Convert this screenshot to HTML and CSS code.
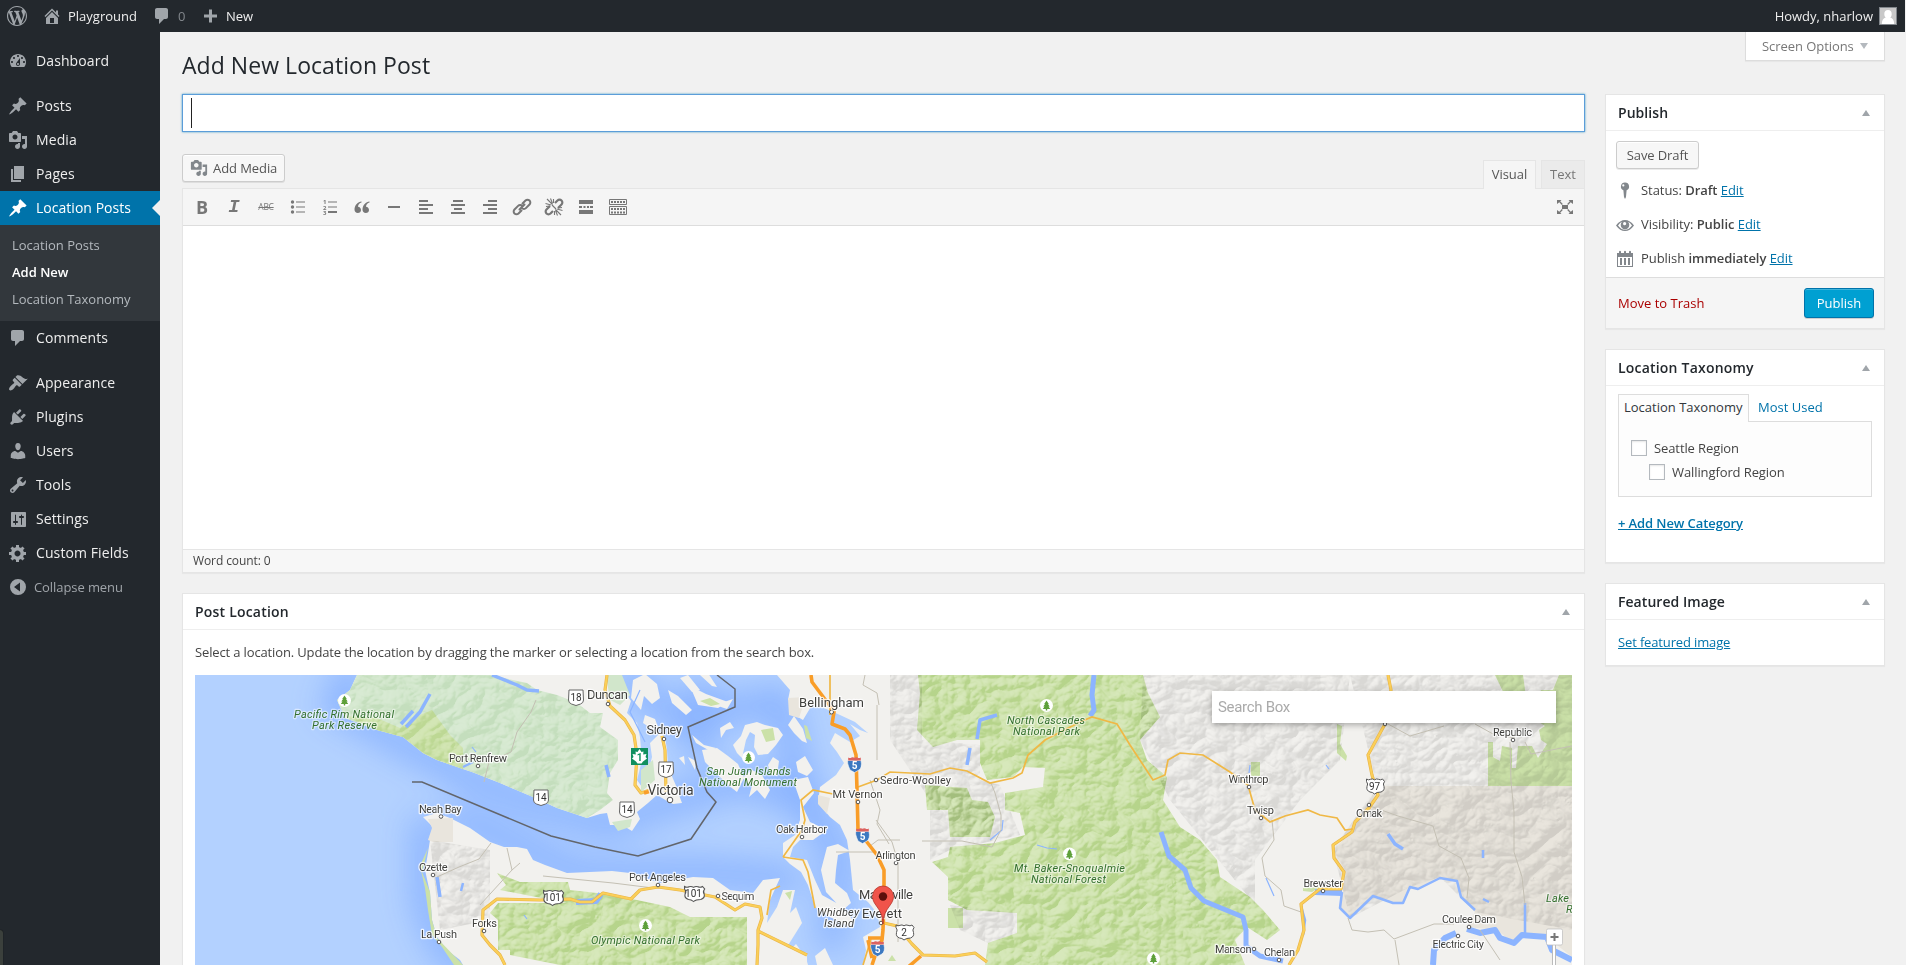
FILE: index.html
```
<!DOCTYPE html>
<html lang="en">
<head>
<meta charset="utf-8">
<title>Add New Location Post</title>
<link rel="stylesheet" href="styles.css">
</head>
<body>
<svg class="defs" width="0" height="0">
<symbol id="i-wp" viewBox="0 0 20 20"><path d="M20 10c0-5.51-4.49-10-10-10C4.48 0 0 4.49 0 10c0 5.52 4.48 10 10 10 5.51 0 10-4.48 10-10zM7.78 15.37L4.37 6.22c.55-.02 1.17-.08 1.17-.08.5-.06.44-1.13-.06-1.11 0 0-1.45.11-2.37.11-.18 0-.37 0-.58-.01C4.12 2.69 6.87 1.11 10 1.11c2.33 0 4.45.87 6.05 2.34-.68-.11-1.65.39-1.65 1.58 0 .74.45 1.36.9 2.1.35.61.55 1.36.55 2.46 0 1.49-1.4 5-1.4 5l-3.03-8.37c.54-.02.82-.17.82-.17.5-.05.44-1.25-.06-1.22 0 0-1.44.12-2.38.12-.87 0-2.33-.12-2.33-.12-.5-.03-.56 1.2-.06 1.22l.92.08 1.26 3.41zM17.41 10c.24-.64.74-1.87.43-4.25.7 1.29 1.05 2.71 1.05 4.25 0 3.29-1.73 6.24-4.4 7.78.97-2.59 1.94-5.2 2.92-7.78zM6.1 18.09C3.12 16.65 1.11 13.53 1.11 10c0-1.3.23-2.48.72-3.59C3.25 10.3 4.67 14.2 6.1 18.09zm4.03-6.63l2.58 6.98c-.86.29-1.76.45-2.71.45-.79 0-1.57-.11-2.29-.33.81-2.38 1.62-4.74 2.42-7.1z"/></symbol>
<symbol id="i-home" viewBox="0 0 20 20"><path fill-rule="evenodd" d="M16 8.5l1.53 1.53-1.06 1.06L10 4.6l-6.47 6.49-1.06-1.06L10 2.5l4 4v-2h2v4zm-6-2.46l6 5.99V18H4v-5.97zM12 17v-5H8v5h4z"/></symbol>
<symbol id="i-comment" viewBox="0 0 20 20"><path d="M5 2h9c1.1 0 2 .9 2 2v7c0 1.1-.9 2-2 2h-2l-5 5v-5H5c-1.1 0-2-.9-2-2V4c0-1.1.9-2 2-2z"/></symbol>
<symbol id="i-plus" viewBox="0 0 20 20"><path d="M17 8.500v3h-5v5H9v-5H4v-3h5v-5h3v5z"/></symbol>
<symbol id="i-dash" viewBox="0 0 20 20"><path fill-rule="evenodd" d="M3.760 16h12.480c1.100-1.370 1.760-3.110 1.760-5 0-4.420-3.580-8-8-8s-8 3.580-8 8c0 1.890.66 3.630 1.760 5zM10 4c.55 0 1 .45 1 1s-.45 1-1 1-1-.45-1-1 .45-1 1-1zM6 6c.55 0 1 .45 1 1s-.45 1-1 1-1-.45-1-1 .45-1 1-1zm8 0c.55 0 1 .45 1 1s-.45 1-1 1-1-.45-1-1 .45-1 1-1zm-5.370 5.550L12 7v6c0 1.100-.9 2-2 2s-2-.9-2-2c0-.57.24-1.080.63-1.450zM4 10c.55 0 1 .45 1 1s-.45 1-1 1-1-.45-1-1 .45-1 1-1zm12 0c.55 0 1 .45 1 1s-.45 1-1 1-1-.45-1-1 .45-1 1-1zm-5 3c0-.55-.45-1-1-1s-1 .45-1 1 .45 1 1 1 1-.45 1-1z"/></symbol>
<symbol id="i-pin" viewBox="0 0 20 20"><path d="M10.440 3.020l1.820-1.820 6.360 6.350-1.830 1.820c-1.050-.68-2.480-.57-3.410.36l-.75.75c-.92.93-1.040 2.350-.35 3.410l-1.830 1.820-2.410-2.410-2.800 2.790c-.42.42-3.380 2.710-3.800 2.290s1.860-3.390 2.280-3.810l2.790-2.790L4.100 9.360l1.830-1.820c1.050.69 2.480.57 3.400-.36l.75-.75c.93-.92 1.050-2.350.36-3.410z"/></symbol>
<symbol id="i-media" viewBox="0 0 20 20"><path fill-rule="evenodd" d="M13 11V4c0-.55-.45-1-1-1h-1.670L9 1H5L3.670 3H2c-.55 0-1 .45-1 1v7c0 .55.45 1 1 1h10c.55 0 1-.45 1-1zM7 4.500c1.380 0 2.500 1.120 2.500 2.500S8.380 9.500 7 9.500 4.500 8.380 4.500 7 5.620 4.500 7 4.500zM14 6h5v10.500c0 1.380-1.120 2.500-2.500 2.500S14 17.880 14 16.500s1.120-2.500 2.500-2.500c.17 0 .34.02.5.05V9h-3V6zm-4 8.050V13h2v3.500c0 1.380-1.120 2.500-2.500 2.500S7 17.880 7 16.500 8.120 14 9.500 14c.17 0 .34.02.5.05z"/></symbol>
<symbol id="i-page" viewBox="0 0 20 20"><path d="M6 15V2h10v13H6zm-1 1h8v2H3V5h2v11z"/></symbol>
<symbol id="i-look" viewBox="0 0 20 20"><path d="M14.480 11.060L7.410 3.990l1.500-1.500c.5-.56 2.300-.47 3.510.32 1.210.8 1.430 1.280 2.910 2.100 1.180.64 2.450 1.260 4.450.85zm-.71.71L6.700 4.700 4.930 6.470c-.39.39-.39 1.020 0 1.410l1.060 1.060c.39.39.39 1.030 0 1.420-.6.6-1.430 1.110-2.210 1.690-.35.26-.7.53-1.010.84C1.430 14.230.4 16.080 1.400 17.070c.99 1 2.840-.03 4.180-1.360.31-.31.58-.66.85-1.020.57-.78 1.080-1.610 1.690-2.210.39-.39 1.020-.39 1.410 0l1.060 1.060c.39.39 1.020.39 1.410 0z"/></symbol>
<symbol id="i-plug" viewBox="0 0 20 20"><path d="M13.110 4.360L9.870 7.600 8 5.730l3.240-3.240c.35-.34 1.050-.2 1.560.32.52.51.66 1.210.31 1.550zm-8 1.770l.91-1.120 9.010 9.010-1.190.84c-.71.71-2.630 1.160-3.820 1.160H6.140L4.900 17.260c-.59.59-1.540.59-2.120 0-.59-.58-.59-1.530 0-2.120l1.240-1.240v-3.880c0-1.130.4-3.190 1.090-3.890zm7.260 3.970l3.240-3.240c.34-.35 1.040-.21 1.550.31.52.51.66 1.210.31 1.550l-3.240 3.250z"/></symbol>
<symbol id="i-user" viewBox="0 0 20 20"><path d="M10 9.250c-2.270 0-2.730-3.440-2.730-3.440C7 4.020 7.820 2 9.970 2c2.160 0 2.980 2.020 2.710 3.810 0 0-.41 3.440-2.680 3.440zm0 2.570L12.720 10c2.390 0 4.520 2.330 4.520 4.530v2.490s-3.650 1.130-7.240 1.130c-3.650 0-7.240-1.130-7.240-1.130v-2.490c0-2.250 1.940-4.480 4.470-4.480z"/></symbol>
<symbol id="i-tool" viewBox="0 0 20 20"><path fill-rule="evenodd" d="M16.680 9.770c-1.340 1.340-3.300 1.670-4.950.99l-5.410 6.520c-.99.99-2.590.99-3.580 0s-.99-2.590 0-3.570l6.520-5.420c-.68-1.650-.35-3.610.99-4.950 1.280-1.280 3.120-1.620 4.720-1.060l-2.890 2.890 2.820 2.820 2.860-2.870c.53 1.580.18 3.390-1.080 4.650zM3.810 16.210c.4.39 1.040.39 1.430 0 .4-.4.4-1.040 0-1.430-.39-.4-1.030-.4-1.430 0-.39.39-.39 1.030 0 1.430z"/></symbol>
<symbol id="i-set" viewBox="0 0 20 20"><path fill-rule="evenodd" d="M18 17V4c0-.55-.45-1-1-1H4c-.55 0-1 .45-1 1v13c0 .55.45 1 1 1h13c.55 0 1-.45 1-1zM8 12h1c.55 0 1 .45 1 1s-.45 1-1 1H8v1.500c0 .28-.22.5-.5.5s-.5-.22-.5-.5V14H6c-.55 0-1-.45-1-1s.45-1 1-1h1V6c0-.28.22-.5.5-.5s.5.22.5.5v6zm5-3h-1c-.55 0-1-.45-1-1s.45-1 1-1h1V6c0-.28.22-.5.5-.5s.5.22.5.5v1h1c.55 0 1 .45 1 1s-.45 1-1 1h-1v6.500c0 .28-.22.5-.5.5s-.5-.22-.5-.5V9z"/></symbol>
<symbol id="i-gear" viewBox="0 0 20 20"><path fill-rule="evenodd" d="M18 12h-2.180c-.17.7-.44 1.350-.81 1.930l1.540 1.540-2.100 2.100-1.540-1.540c-.58.36-1.230.63-1.910.79V19H8v-2.180c-.68-.16-1.330-.43-1.910-.79l-1.540 1.540-2.120-2.120 1.540-1.540c-.36-.58-.63-1.230-.79-1.910H1V9.030h2.170c.16-.7.44-1.350.8-1.940L2.430 5.550l2.100-2.100 1.540 1.540c.58-.37 1.240-.64 1.930-.81V2h3v2.180c.68.16 1.330.43 1.910.79l1.540-1.540 2.120 2.120-1.540 1.540c.36.59.64 1.240.8 1.940H18V12zm-8.500 1.500c1.660 0 3-1.340 3-3s-1.340-3-3-3-3 1.340-3 3 1.340 3 3 3z"/></symbol>
<symbol id="i-collapse" viewBox="0 0 20 20"><path fill-rule="evenodd" d="M10 2a8 8 0 1 0 0 16 8 8 0 0 0 0-16zm2 12.500L6 10l6-4.500z"/></symbol>
</svg>

<header class="bar">
  <a class="bar-logo"><svg class="ic"><use href="#i-wp"/></svg></a>
  <a class="bar-item home"><svg class="ic"><use href="#i-home"/></svg>Playground</a>
  <a class="bar-item count"><svg class="ic"><use href="#i-comment"/></svg><span>0</span></a>
  <a class="bar-item new"><svg class="ic"><use href="#i-plus"/></svg>New</a>
  <a class="bar-item howdy">Howdy, nharlow<svg class="avatar" viewBox="0 0 18 18"><path fill="#82878c" d="M0 0h18v18H0z"/><path fill="#c8c8c8" d="M1 1h16v16H1z"/><path fill="#fff" d="M9 3c2.400 0 3.700 1.600 3.700 4 0 1.700-.7 3-1.500 3.600 2.500.6 3.800 2.400 4 6.400H2.800c.2-4 1.500-5.800 4-6.400C6 10 5.300 8.700 5.300 7c0-2.400 1.300-4 3.700-4z"/></svg></a>
</header>

<div class="wrap">
<nav class="menu">
  <a class="mi"><svg class="ic"><use href="#i-dash"/></svg>Dashboard</a>
  <a class="mi gap"><svg class="ic"><use href="#i-pin"/></svg>Posts</a>
  <a class="mi"><svg class="ic"><use href="#i-media"/></svg>Media</a>
  <a class="mi"><svg class="ic"><use href="#i-page"/></svg>Pages</a>
  <a class="mi current"><svg class="ic"><use href="#i-pin"/></svg>Location Posts</a>
  <div class="sub"><a>Location Posts</a><a class="on">Add New</a><a>Location Taxonomy</a></div>
  <a class="mi"><svg class="ic"><use href="#i-comment"/></svg>Comments</a>
  <a class="mi gap"><svg class="ic"><use href="#i-look"/></svg>Appearance</a>
  <a class="mi"><svg class="ic"><use href="#i-plug"/></svg>Plugins</a>
  <a class="mi"><svg class="ic"><use href="#i-user"/></svg>Users</a>
  <a class="mi"><svg class="ic"><use href="#i-tool"/></svg>Tools</a>
  <a class="mi"><svg class="ic"><use href="#i-set"/></svg>Settings</a>
  <a class="mi"><svg class="ic"><use href="#i-gear"/></svg>Custom Fields</a>
  <a class="mi collapse"><svg class="ic"><use href="#i-collapse"/></svg>Collapse menu</a>
  <span class="edge-tab"></span>
</nav>

<main class="content">
  <div class="head"><h1>Add New Location Post</h1><button class="screen-opts">Screen Options<i class="tri down"></i></button></div>
  <div class="cols">
  <section class="primary">
    <div class="title-box"><span class="caret"></span></div>
    <div class="ed-top">
      <button class="btn media"><svg class="ic"><use href="#i-media"/></svg>Add Media</button>
      <div class="tabs"><span class="tab active">Visual</span><span class="tab">Text</span></div>
    </div>
    <div class="editor">
      <div class="tools">
        <span class="t bold">B</span>
        <span class="t ital">I</span>
        <span class="t abc">ABC</span>
        <svg class="t" viewBox="0 0 20 20"><g fill="#777"><circle cx="4.500" cy="5" r="1.700"/><circle cx="4.500" cy="10" r="1.700"/><circle cx="4.500" cy="15" r="1.700"/><path d="M8 4.500h9v1H8zM8 9.500h9v1H8zM8 14.500h9v1H8z"/></g></svg>
        <svg class="t" viewBox="0 0 20 20"><g fill="#777"><path d="M8 4.500h9v1H8zM8 9.500h9v1H8zM8 14h9v2H8z" /><text class="tiny" x="3" y="7">1</text><text class="tiny" x="3" y="12.500">2</text><text class="tiny" x="3" y="18">3</text></g></svg>
        <svg class="t" viewBox="0 0 20 20"><path fill="#777" d="M9.500 4.500C6 5 2.500 8 2.500 12.500c0 2 1.400 3.500 3.300 3.500 1.800 0 3.200-1.300 3.200-3.100S7.700 10 6 9.800C6 7.500 7.500 6.200 9.500 5.600zM17.500 4.500c-3.500.5-7 3.500-7 8 0 2 1.400 3.500 3.300 3.500 1.800 0 3.200-1.300 3.200-3.100S15.700 10 14 9.800c0-2.300 1.500-3.600 3.500-4.200z"/></svg>
        <svg class="t" viewBox="0 0 20 20"><path fill="#777" d="M4 9h12v2H4z"/></svg>
        <svg class="t" viewBox="0 0 20 20"><path fill="#777" d="M3 3h9v2H3zM3 7h14v2H3zM3 11h9v2H3zM3 15h14v2H3z"/></svg>
        <svg class="t" viewBox="0 0 20 20"><path fill="#777" d="M5 3h10v2H5zM3 7h14v2H3zM6 11h8v2H6zM3 15h14v2H3z"/></svg>
        <svg class="t" viewBox="0 0 20 20"><path fill="#777" d="M8 3h9v2H8zM3 7h14v2H3zM8 11h9v2H8zM3 15h14v2H3z"/></svg>
        <svg class="t" viewBox="0 0 20 20"><g fill="none" stroke="#777" stroke-width="2" stroke-linecap="round"><path d="M10.500 6.500l3-3a2.800 2.800 0 0 1 4 4l-3.600 3.600a2.800 2.800 0 0 1-4 0M9.500 13.500l-3 3a2.800 2.800 0 0 1-4-4l3.600-3.600a2.800 2.800 0 0 1 4 0M7.500 12.500l5-5"/></g></svg>
        <svg class="t" viewBox="0 0 20 20"><g fill="none" stroke="#777" stroke-width="2.200"><path d="M11 6l2.500-2.500a2.700 2.700 0 0 1 4 4L14 11M9 14l-2.500 2.500a2.700 2.700 0 0 1-4-4L6 9"/><path stroke-width="1.100" d="M8.500 7.500L3 2M8.500 6.500L6.500 1.500M7 8L1.500 6.500M9.500 6L9.500 2M6 9L2 9.500M11.500 12.500L17 18M11.500 13.500L13.500 18.500M13 12L18.500 13.500M10.500 14v4M14 11l4-.5M8 8l4 4"/></g></svg>
        <svg class="t" viewBox="0 0 20 20"><path fill="#777" d="M3 3h14v4H3zM3 13h14v4H3zM3 9h3v2H3zM7.500 9h2v2h-2zM11 9h2v2h-2zM14 9h3v2h-3z"/></svg>
        <svg class="t" viewBox="0 0 20 20"><path fill="none" stroke="#777" d="M1.500 2.500h17v5h-17zM1.500 9.500h17v8h-17z"/><path stroke="#777" stroke-width="2" stroke-dasharray="2 1" d="M3 5h14M3 12h14M3 15.500h2M6 15.500h8M15 15.500h2"/></svg>
        <svg class="t full" viewBox="0 0 20 20"><path fill="#777" d="M7 8h6v4H7zM2 3h4.500L5.200 4.300 7.800 7l-.9.900-2.600-2.700L2 7zM18 3h-4.500l1.300 1.300L12.200 7l.9.900 2.600-2.700L18 7zM2 17h4.500l-1.300-1.300L7.800 13l-.9-.9-2.600 2.700L2 13zM18 17h-4.500l1.300-1.300-2.600-2.700.9-.9 2.600 2.700L18 13z"/></svg>
      </div>
      <div class="canvas"></div>
      <div class="status">Word count: 0</div>
    </div>
    <div class="box loc">
      <h2>Post Location<i class="tri"></i></h2>
      <p>Select a location. Update the location by dragging the marker or selecting a location from the search box.</p>
      <div class="map">
        <svg class="map-art" viewBox="195 675 1377 290" width="1377" height="290">
          <defs>
            <filter id="blur" x="-20%" y="-30%" width="140%" height="160%"><feGaussianBlur stdDeviation="16"/></filter>
            <filter id="relief" x="0" y="0" width="100%" height="100%" color-interpolation-filters="sRGB"><feTurbulence type="turbulence" baseFrequency="0.034 0.042" numOctaves="3" seed="8"/><feColorMatrix values="0 0 0 0 0 0 0 0 0 0 0 0 0 0 0 1 0 0 0 0"/><feDiffuseLighting surfaceScale="8" diffuseConstant="1" lighting-color="#fff"><feDistantLight azimuth="225" elevation="34"/></feDiffuseLighting></filter>
            <clipPath id="forest"><path d="M918 675H1143L1148 693 1160 717 1140 740 1147 760 1167 777 1163 800 1180 827 1200 840 1217 860 1220 877 1250 897 1263 910 1280 930 1267 940 1247 927 1235 940 1245 965H985L988 943 1017 933V913L967 910 948 900V877L932 862 948 857 950 847 995 843 1025 835 1020 813 1005 810V793L1043 787 1045 768 1023 767 1013 777 987 780 980 763V740H957L933 747 917 730 920 693ZM925 785L967 788 972 800 988 802 995 817 990 837H950L948 810H927Z"/><path d="M497 873L520 882H568L570 890 597 893 637 900 670 907 690 917H747V965H560L510 955V950H498V920L490 913 498 903H567L500 890 506 885Z"/></clipPath>
            <clipPath id="vi"><path d="M357 675L350 690 337 700 345 718 377 730 403 737 423 753 437 760 463 769 472 772 500 783 533 797 557 808 587 818 600 810 613 800 607 793 610 773 618 760V740L600 727 603 713 590 713 577 703 557 695 537 690 527 683 490 675Z"/></clipPath>
            <clipPath id="hills"><path d="M890 675H922V740L980 745V780L1000 785 1020 835 950 850 930 860V800L890 740ZM1143 675H1350L1340 760 1300 800 1255 860V905L1170 800 1140 740ZM1377 786H1572V930L1475 912 1440 877 1410 887 1350 918 1333 850ZM950 905L1017 913V933L988 943 960 930ZM1350 675H1572V786H1377ZM430 840L490 850V920L440 930Z"/></clipPath>
            <g id="tree"><circle r="6.500" fill="#fff"/><path fill="#5ea03a" d="M0-5l2.300 3.500H1.500L3.200 1H2l1.700 2.500H.7V5H-.7V3.500h-3L-2 1h-1.200l1.700-2.500h-.8z"/></g>
            <g id="ca"><path fill="#fff" stroke="#666" d="M-7-7.500h14l.5 10q0 3-3 4L0 8-4.500 6.500q-3-1-3-4z"/></g>
            <g id="us"><path fill="#fff" stroke="#555" d="M-8-7q2 1.500 4 .3 2-1 4 .5 2-1.500 4-.5 2 1.200 4-.3l2 2.500q-2 2.500-.5 5 1 4-3 5.500Q2 6 0 8q-2-2-4.500-2-4-1.500-3-5.500 1.500-2.500-.5-5z"/></g>
            <g id="i5"><path fill="#3c78c0" stroke="#fff" stroke-width=".6" d="M-6.500-4h13q1.500 7-2 9.500L0 8l-4.500-2.500Q-8-2.500-6.500-4z"/><path fill="#dc6260" d="M-6.300-7q2 1 3.300 0 1.500-.8 3 .2 1.500-1 3-.2 1.300 1 3.300 0v3H-6.300z"/></g>
          </defs>
          <path fill="#b3d1ff" d="M195 675h1377v290H195z"/>
          <g filter="url(#blur)" opacity=".9"><path fill="none" stroke="#82adff" stroke-width="26" d="M357 665L337 705 403 742 463 774 533 802 607 825 660 805 695 795 740 780 800 800 850 870M426 817L426 900 440 940 470 975M450 815L520 846 580 875 700 872 800 880M620 675L680 720 780 700 800 780 840 860 830 950M700 680V760"/></g>
          <g fill="#f2f1ee">
            <path d="M357 675L350 690 337 700 345 718 377 730 403 737 423 753 437 760 463 769 472 772 500 783 533 797 557 808 587 818 600 814 607 813 610 825 622 825 632 831 640 819 637 812 648 803 657 795 667 801 673 804 682 803 679 795 677 788 668 767 667 750 665 737 660 733 650 743 652 757 648 773 642 787 637 780 642 760 640 737 637 723 627 713 631 701 623 690 620 675Z"/>
            <path d="M423 817L433 827 430 840 428 853 425 870 430 893 432 920 437 937 447 950 460 960 463 965H807L807 953 787 947 802 923 796 907 790 913 795 890 783 890 777 907 767 923 770 900 780 878 763 880 753 893 730 890 713 878 693 877 660 883 630 873 612 871 567 873 545 865 533 860 527 849 517 847 504 847 490 842 470 828 450 818 437 813Z"/>
            <path d="M777 675L790 690 788 700 802 701 798 717 803 720 812 705 824 708 840 715 855 722 862 728 868 733 860 730 850 724 860 736 850 742 835 733 830 743 837 752 844 763 836 775 820 787 818 803 830 817 840 825 847 840 850 860 853 890 868 902 877 913 880 927 863 937 866 950 863 965H1572V675Z"/>
            <path d="M793 780L808 777 814 793 803 807 810 822 827 830 813 840 800 840 793 847 790 857 807 860 815 880 822 895 840 905 853 920 850 927 830 917 815 907 808 885 801 872 790 864 783 857V843L795 835 800 820V800ZM827 847L838 844 850 851 838 855 836 870 835 883 847 893 851 903 843 910 826 892 821 870Z"/>
            <path d="M737 753L733 745 741 736 745 725 757 722 765 725 778 728 783 735 776 745 768 754 758 755 754 747 755 735 750 732 746 740 742 758ZM702 750L717 748 728 756 738 764 744 778 737 792 728 785 715 772 705 762ZM745 775L752 770 762 775 770 790 765 799 757 790 749 797 752 785ZM768 765l5-8 6 4-2 15-7-2zM788 725l6-9 9 13 4 14-5-2-8-8zM796 762l9-6 8 14-6 6-9-4zM720 728l10-6 4 6-8 2-5 8z"/>
            <path d="M633 680l12-6 12 10 3 14-8 6-8-8-3 14-10-12zM668 690l10 6 14 14-6 5-14-12zM690 686l16 8 22 8-10 6-20-3zM680 678l8-3 12 15-8 2zM700 675l8-2 9 14-5-1zM645 715l10 4 3 8-6 2-9-6zM692 735l12 10 12 3-6 3-14-8zM715 705l18-6-6 10zM742 777l10-3-2 12zM790 950l6-6 10 14 2 7h-16zM815 956l10-8 8 17h-16zM679 758l6 7-1-9zM688 757l8 4-1 9z"/>
          </g>
          <g class="rural"><path fill="#d1e6cb" d="M357 675L350 690 337 700 345 718 377 730 403 737 423 753 437 760 463 769 472 772 500 783 533 797 557 808 587 818 600 810 613 800 607 793 610 773 618 760V740L600 727 603 713 590 713 577 703 557 695 537 690 527 683 490 675Z"/><path fill="#cbe1a8" d="M345 716L377 718 400 728 420 715 432 710 450 735 463 748 463 769 437 760 423 753 403 737 377 730ZM497 873L520 882H568L570 890 597 893 637 900 670 907 690 917H747V965H560L510 955V950H498V920L490 913 498 903H567L500 890 506 885ZM428 848l-6 24 8 20 2 28 5 18 26 27h-9l-12-18-10-12-4-25-3-22-5-22z"/><path fill="#d1e6cb" d="M606 675h16l8 20-10 10-10-5zM641 770l12-10 2 20-14 12zM612 822l20-3-2 8-12 4z"/>
          <path fill="#cbe1a8" d="M918 675H1143L1148 693 1160 717 1140 740 1147 760 1167 777 1163 800 1180 827 1200 840 1217 860 1220 877 1250 897 1263 910 1280 930 1267 940 1247 927 1235 940 1245 965H985L988 943 1017 933V913L967 910 948 900V877L932 862 948 857 950 847 995 843 1025 835 1020 813 1005 810V793L1043 787 1045 768 1023 767 1013 777 987 780 980 763V740H957L933 747 917 730 920 693ZM925 785L967 788 972 800 988 802 995 817 990 837H950L948 810H927ZM948 908h15v20h-15zM1495 675h28l3 22h12l3-7h12l6-15h13V786H1488V742h5v15l7 4 2-15 10 2v20h4l2-22h14l6 12 9-14-6-4-2-10 6-4-12-8-2-14h-22zM1337 724l5 2-2 18 7 12-1 5-9-8zM1251 762h9v14h-9zM1303 888l17-1-8 5-9-1zM761 730l12-2 2 12-9 2zM700 701l10-3 10 6-9 2zM804 725l3 1 5 15-6-3zM888 961l4-6 4 6zM785 893l7-2-2 9z"/>
          <path fill="#e9e5dd" d="M1377 786H1572V957L1547 937 1523 933 1513 943 1497 930 1467 927 1475 912 1460 897 1457 880 1440 877 1418 890 1410 887 1403 903H1393L1373 895 1350 918 1340 910 1343 890 1345 870 1333 850 1353 830ZM428 819l25-1v24h-20l-5-2 4-12zM788 698l18-1-7 21-10-3zM818 795l12 3-3 16-9-10z"/></g>
          <g class="relief strong" clip-path="url(#forest)"><rect x="440" y="675" width="900" height="290" filter="url(#relief)"/></g>
          <g class="relief" clip-path="url(#vi)"><rect x="330" y="675" width="300" height="150" filter="url(#relief)"/></g>
          <g class="relief soft" clip-path="url(#hills)"><rect x="425" y="675" width="1147" height="290" filter="url(#relief)"/></g>
          <g fill="none" stroke="#8cb4ff" stroke-linejoin="round">
            <path stroke-width="5" d="M1094 675L1092 695 1094 710 1090 716M1161 832L1169 856 1185 870 1191 888 1204 901 1243 917 1246 930 1246 946 1260 956 1283 961"/>
            <path stroke-width="3.500" d="M977 739L980 720 997 715M970 748L967 765M430 694L420 712 406 727M413 711L401 724M492 675l25 10 10 5 12 1M437 877l3 20M606 765l3 12M1388 834l7 10 8 5"/>
            <path stroke-width="6" d="M1467 929L1480 933 1495 930 1500 938 1514 943 1522 935 1547 937 1552 950 1572 960M1433 965L1434 950 1445 938 1456 933M576 902l20-1 5-7M1315 892l27 1"/>
            <path stroke-width="2.500" d="M1342 892L1340 908 1350 918 1373 896 1393 903H1403L1410 887 1418 889 1440 878 1457 881 1461 897 1475 910M1301 906l4 14-2 15M1547 937l-22-2 0-32M463 767l10-5M463 883l-2 8M1483 850v8M1483 899l6 3"/>
            <path stroke-width="1.200" d="M990 840l12-10 1-10M1037 845l10 3 10 1M1250 765l-1 8M1326 765l3 4M1266 878l8 18M640 690l-10 22 15 30M472 747l4 5M524 915l3 4"/>
          </g>
          <g fill="none" stroke="#c4c0b4" stroke-width="1"><path d="M536 700l-5 12-14 20-6 20-22 10-5 20M865 675l-2 10 14 8 2 12M877 705v55M870 780l10 30-3 14 12 20M876 820l16 22 6 20v80M437 877l22-10 20-8 12-16M507 848l5 22 8-7M480 905l32-35M900 840h-22l-8 6M836 852h38M991 783l4 10 6 22v15l-9 17-30-6h-40M1272 820l2 20-12 18 3 18 16 14 3 16 17 6M1348 918l4 12 16 2 16-2 10 9 40-15h20M1388 724l22 12 34-10M1475 724l18 10 22 4M1510 742l1 40 3 30 0 40 8 25 3 28M1370 806l28 10 35 10 6 20 22 12 8 20-2 20M1480 930l20 30M1395 940l4 25M1525 742l6 12 41-8M543 876l70 7 40 5"/></g>
          <path class="road-edge" d="M607 675L605 690 610 706 625 720 634 735 637 755 635 785 641 793 650 790M662 736L665 750 666 792M505 965L500 955 490 945 482 935 483 910 497 899 540 900 570 899 580 902H592L603 893 631 899 640 890 658 887 680 890 715 897 735 910 745 904 760 907 762 918 758 930V945L757 965M758 931L807 955M1388 675L1391 690 1385 724 1368 755 1372 775 1378 795 1369 808 1355 822 1352 832 1333 845 1334 858 1344 872 1341 889H1320L1301 904 1304 930 1298 950 1289 965M884 923L897 926 912 944 923 955 955 956 975 953 987 962"/>
          <path class="road" d="M607 675L605 690 610 706 625 720 634 735 637 755 635 785 641 793 650 790M662 736L665 750 666 792M505 965L500 955 490 945 482 935 483 910 497 899 540 900 570 899 580 902H592L603 893 631 899 640 890 658 887 680 890 715 897 735 910 745 904 760 907 762 918 758 930V945L757 965M758 931L807 955M1388 675L1391 690 1385 724 1368 755 1372 775 1378 795 1369 808 1355 822 1352 832 1333 845 1334 858 1344 872 1341 889H1320L1301 904 1304 930 1298 950 1289 965M884 923L897 926 912 944 923 955 955 956 975 953 987 962"/>
          <g fill="none" stroke="#f0b845" stroke-width="1.700"><path d="M830 675v40M783 857L803 860 808 872 815 908M783 857l12-17 7-10 3-10-4-20 12-10 20 4M767 915l4-25 9-4M858 787L877 780 890 772 930 774 950 768 967 771 990 783 1013 778 1022 773 1028 755 1045 740 1080 722 1092 717 1117 724 1130 745 1153 780 1165 775 1168 760 1180 753 1203 755 1230 772 1248 785 1255 810 1270 822 1285 816 1308 810 1320 815 1337 818 1345 830 1353 829M863 965l8-26"/></g>
          <path fill="none" stroke="#f99d28" stroke-width="3.600" stroke-linejoin="round" d="M811 675L812 682 830 706 834 712 832 724 845 729 850 735 856 755 857 790 858 830 863 837 877 855 884 870V900L883 930 882 940 877 950 872 965M868 938h14M868 940l4 18M921 956l-14 12M644 793l7-2"/>
          <path fill="none" stroke="#62656b" stroke-width="1.500" d="M412 782h10L551 836 595 847 638 856 691 839 716 802 707 792 697 768 688 727 735 707V689L717 675"/>
          <g fill="#fff" stroke="#555"><circle cx="608" cy="704" r="1.800"/><circle cx="664" cy="739" r="1.800"/><circle cx="478" cy="766" r="1.800"/><circle cx="441" cy="816.500" r="1.800"/><circle cx="433" cy="875" r="1.800"/><circle cx="484" cy="931" r="1.800"/><circle cx="439" cy="942" r="1.800"/><circle cx="670" cy="800" r="2.800"/><circle cx="658" cy="885" r="1.800"/><circle cx="718" cy="896" r="1.800"/><circle cx="831.500" cy="712" r="2"/><circle cx="876" cy="780" r="1.800"/><circle cx="858" cy="802" r="1.800"/><circle cx="802" cy="837" r="1.800"/><circle cx="896" cy="863" r="1.800"/><circle cx="881" cy="923" r="1.800"/><circle cx="1249" cy="787" r="1.800"/><circle cx="1261" cy="818" r="1.800"/><circle cx="1369" cy="805" r="1.800"/><circle cx="1323" cy="891" r="1.800"/><circle cx="1513" cy="740" r="1.800"/><circle cx="1469" cy="927" r="1.800"/><circle cx="1458" cy="936" r="1.800"/><circle cx="1254" cy="949" r="1.800"/><circle cx="1279" cy="960" r="1.800"/><circle cx="1385" cy="724" r="1.800"/></g>
          <use href="#tree" x="344.500" y="700.500"/><use href="#tree" x="645.500" y="925.500"/><use href="#tree" x="748.500" y="757.500"/><use href="#tree" x="1046.500" y="705.500"/><use href="#tree" x="1069.500" y="854"/><use href="#tree" x="1153.500" y="958.500"/>
          <use href="#ca" x="576" y="697.500"/><use href="#ca" x="666" y="769.500"/><use href="#ca" x="541" y="797.500"/><use href="#ca" x="627" y="809.500"/>
          <use href="#us" x="904" y="932"/><use href="#us" x="1374.500" y="786"/>
          <use href="#us" transform="translate(552.500 897.500) scale(1.120 1)"/><use href="#us" transform="translate(693.500 893.500) scale(1.120 1)"/>
          <use href="#i5" x="854.500" y="764.500"/><use href="#i5" x="862.500" y="835.500"/><use href="#i5" x="877.500" y="948.500"/>
          <path fill="#0f8f5f" d="M631 748h17v17h-17z"/><path fill="#fff" d="M639.500 749l2 3 2-.5-.3 3 3.300-.5-1 3 1.500 1.500-4 3-1.500 2h-4l-1.500-2-4-3 1.500-1.500-1-3 3.300.5-.3-3 2 .5z"/>
          <g class="num"><text x="576" y="701">18</text><text x="666" y="773">17</text><text x="541" y="801">14</text><text x="627" y="813">14</text><text x="552.500" y="901">101</text><text x="693.500" y="897">101</text><text x="904" y="936">2</text><text x="1374.500" y="789.500">97</text><text class="g" x="639.500" y="760.500">1</text><text class="w" x="854.500" y="769">5</text><text class="w" x="862.500" y="840">5</text><text class="w" x="877.500" y="953">5</text></g>
          <g class="lbl big"><text x="587" y="699" textLength="41">Duncan</text><text x="646.500" y="734" textLength="35.500">Sidney</text><text class="xl" x="647.500" y="795" textLength="46">Victoria</text><text x="799" y="707" textLength="65">Bellingham</text><text x="859" y="899" textLength="54">Marysville</text><text x="862" y="918" textLength="40">Everett</text></g>
          <g class="lbl"><text x="449" y="761.500" textLength="58">Port Renfrew</text><text x="419" y="812.500" textLength="42.500">Neah Bay</text><text x="419" y="870.500" textLength="28.500">Ozette</text><text x="472" y="927" textLength="25">Forks</text><text x="421" y="938" textLength="36">La Push</text><text x="629" y="881" textLength="57">Port Angeles</text><text x="721.500" y="900" textLength="33">Sequim</text><text x="880" y="784" textLength="71">Sedro-Woolley</text><text x="832.500" y="798" textLength="50">Mt Vernon</text><text x="776" y="833" textLength="51">Oak Harbor</text><text x="875.500" y="859" textLength="40">Arlington</text><text x="1228.500" y="783" textLength="40">Winthrop</text><text x="1247" y="814" textLength="27">Twisp</text><text x="1356" y="817" textLength="26">Omak</text><text x="1303.500" y="887" textLength="39.500">Brewster</text><text x="1493" y="736" textLength="39">Republic</text><text x="1442" y="923" textLength="54">Coulee Dam</text><text x="1432.500" y="948" textLength="51.500">Electric City</text><text x="1215" y="953" textLength="36.500">Manson</text><text x="1264" y="956" textLength="31">Chelan</text>
          <text class="it" x="817" y="916" textLength="42">Whidbey</text><text class="it" x="824" y="927" textLength="30">Island</text></g>
          <g class="lbl park"><text x="294" y="717.500" textLength="100">Pacific Rim National</text><text x="312" y="728.500" textLength="65">Park Reserve</text><text x="591" y="943.500" textLength="109">Olympic National Park</text><text x="706.500" y="775" textLength="84">San Juan Islands</text><text x="699" y="786" textLength="98">National Monument</text><text x="1007" y="724" textLength="78">North Cascades</text><text x="1013" y="735" textLength="67">National Park</text><text x="1014" y="872" textLength="111">Mt. Baker-Snoqualmie</text><text x="1031" y="883" textLength="75">National Forest</text><text x="1546" y="902" textLength="23">Lake</text><text x="1566" y="913">R</text></g>
          <path fill="#f0544a" stroke="#b6352a" stroke-width=".8" d="M883 924c-.6-9-2.500-12.500-6.500-18-2-2.700-4-5.600-4-9.500a10.500 10.500 0 0 1 21 0c0 3.900-2 6.800-4 9.500-4 5.500-5.900 9-6.500 18z"/><circle cx="883" cy="896.500" r="4.200" fill="#5c0f0c"/>
          <path fill="#fff" stroke="#bbb" d="M1552.500 944h3v22h-3z"/><rect x="1546.500" y="929" width="16" height="16" rx="1.500" fill="#fff" stroke="#bbb" stroke-width=".7"/><path fill="#777" d="M1553.500 933h2v3h3v2h-3v3h-2v-3h-3v-2h3z"/>
        </svg>
        <div class="search">Search Box</div>
      </div>
    </div>
  </section>

  <aside class="side">
    <div class="box">
      <h2>Publish<i class="tri"></i></h2>
      <div class="pub">
        <button class="btn save">Save Draft</button>
        <div class="row"><svg class="ic" viewBox="0 0 20 20"><path fill-rule="evenodd" d="M10 1.500a4 4 0 0 1 1.600 7.700L11 16l-1 2-1-2-.6-6.800A4 4 0 0 1 10 1.500zM8.300 3.300a1.100 1.100 0 1 0 0 2.200 1.100 1.100 0 0 0 0-2.200z"/></svg><span>Status: <b>Draft</b> <a>Edit</a></span></div>
        <div class="row"><svg class="ic" viewBox="0 0 20 20"><path fill-rule="evenodd" d="M1 10.500Q5 5 10 5t9 5.500Q15 16 10 16T1 10.500zm2 0Q6 14.700 10 14.700t7-4.200Q15 7.600 12.800 6.800a4.300 4.300 0 1 1-5.600 0Q5 7.600 3 10.500zM9.600 7a1.600 1.600 0 1 0 .1 3.200A1.600 1.600 0 0 0 9.600 7z"/></svg><span>Visibility: <b>Public</b> <a>Edit</a></span></div>
        <div class="row"><svg class="ic" viewBox="0 0 20 20"><path fill-rule="evenodd" d="M2 4h2V2.500q1-1.500 2 0V4h3V2.500q1-1.500 2 0V4h3V2.500q1-1.500 2 0V4h2v14H2zm1 4v9h14V8zM5 9h2v7H5zM9 9h2v7H9zM13 9h2v7h-2z"/></svg><span>Publish <b>immediately</b> <a>Edit</a></span></div>
      </div>
      <div class="actions"><span class="trash">Move to Trash</span><button class="primary-btn">Publish</button></div>
    </div>
    <div class="box tax">
      <h2>Location Taxonomy<i class="tri"></i></h2>
      <div class="tax-tabs"><span class="tt on">Location Taxonomy</span><span class="tt">Most Used</span></div>
      <div class="tax-panel"><label><i class="cb"></i>Seattle Region</label><label class="child"><i class="cb"></i>Wallingford Region</label></div>
      <a class="addcat">+ Add New Category</a>
    </div>
    <div class="box feat">
      <h2>Featured Image<i class="tri"></i></h2>
      <a class="setimg">Set featured image</a>
    </div>
  </aside>
  </div>
</main>
</div>
</body>
</html>
```
FILE: styles.css
```
* { box-sizing: border-box; }
html, body { margin: 0; height: 100%; overflow: hidden; }
body { background: #f1f1f1; color: #444; font: 13px/18px "Open Sans", sans-serif; }
button { font: inherit; margin: 0; }
.defs { display: block; position: absolute; }
.ic { width: 20px; height: 20px; fill: #a0a5aa; flex: none; }

.bar { display: flex; align-items: center; width: 1905px; height: 32px; padding: 0 9px 0 7px; background: #23282d; color: #eee; }
.bar-logo { display: flex; width: 35px; }
.bar-item { display: flex; align-items: center; }
.home .ic { margin-right: 6px; }
.home { width: 110px; }
.count { color: #82878c; width: 48px; }
.count .ic { margin-right: 6px; }
.new .ic { margin-right: 6px; }
.howdy { margin-left: auto; }
.avatar { width: 18px; height: 18px; margin-left: 6px; margin-right: -1px; }

.wrap { display: flex; height: 933px; }
.menu { width: 160px; flex: none; background: #23282d; padding-top: 12px; position: relative; }
.mi { display: flex; align-items: center; height: 34px; padding-left: 8px; color: #eee; font-size: 14px; letter-spacing: .1px; }
.mi .ic { margin-right: 8px; }
.mi.gap { margin-top: 11px; }
.mi.current { background: #0073aa; color: #fff; position: relative; letter-spacing: .03px; }
.mi.current .ic { fill: #fff; }
.mi.current::after { content: ""; position: absolute; right: 0; top: 9px; border: 8px solid transparent; border-left: 0; border-right-color: #f1f1f1; }
.sub { background: #32373c; height: 96px; padding: 7px 12px; display: flex; flex-direction: column; color: #b4b9be; }
.sub a { line-height: 27px; }
.sub .on { color: #fff; font-weight: 600; }
.mi.collapse { color: #a0a5aa; font-size: 13px; letter-spacing: -.08px; }
.mi.collapse .ic { margin-right: 6px; }
.edge-tab { position: absolute; left: 0; bottom: 0; width: 3px; height: 35px; background: #3b403c; border-radius: 0 3px 0 0; box-shadow: 0 0 1px #000; }

.content { flex: 1; padding: 0 21px 0 22px; }
.head { display: flex; justify-content: space-between; align-items: flex-start; height: 62px; }
h1 { margin: 17px 0 0; font-size: 23px; line-height: 32px; font-weight: 400; color: #23282d; letter-spacing: .05px; }
.screen-opts { display: flex; align-items: center; height: 29px; width: 140px; padding: 0 0 0 16px; background: #fff; border: 1px solid #ddd; border-top: 0; color: #777; letter-spacing: -.06px; box-shadow: 0 1px 1px rgba(0,0,0,.04); }
.tri { width: 0; height: 0; border: 4px solid transparent; border-top: 0; border-bottom: 6px solid #a0a5aa; }
.tri.down { border-bottom: 0; border-top: 6px solid #b4b9be; margin-left: 6px; }
.cols { display: flex; gap: 20px; }
.primary { width: 1403px; flex: none; }
.title-box { height: 38px; background: #fff; border: 1px solid #5b9dd9; box-shadow: 0 0 2px rgba(30,140,190,.8); padding: 3px 8px; }
.caret { display: block; width: 1px; height: 30px; background: #222; }
.ed-top { display: flex; justify-content: space-between; align-items: flex-end; height: 56px; }
.btn { height: 28px; padding: 0 10px 1px; background: #f7f7f7; border: 1px solid #ccc; border-radius: 3px; color: #555; box-shadow: inset 0 1px 0 #fff, 0 1px 0 rgba(0,0,0,.08); }
.save { width: 83px; padding: 0 0 1px; letter-spacing: -.1px; }
.media { display: flex; align-items: center; width: 103px; padding: 0 0 0 7px; margin-bottom: 6px; letter-spacing: -.08px; }
.media .ic { width: 18px; height: 18px; margin-right: 5px; fill: #82878c; }
.tabs { display: flex; gap: 5px; align-items: flex-end; }
.tab { width: 44px; text-align: center; height: 28px; line-height: 27px; border: 1px solid #e5e5e5; border-bottom: 0; background: #ebebeb; color: #777; }
.tab.active { width: 53px; background: #f5f5f5; color: #555; height: 29px; margin-bottom: -1px; position: relative; }
.editor { border: 1px solid #e5e5e5; box-shadow: 0 1px 1px rgba(0,0,0,.04); height: 385px; }
.tools { display: flex; align-items: center; gap: 12px; height: 37px; padding: 0 9px; background: #f5f5f5; border-bottom: 1px solid #ddd; color: #777; }
.t { width: 20px; height: 20px; flex: none; text-align: center; line-height: 20px; }
.full { margin-left: auto; }
.bold { font: 700 18px/21px "Open Sans", sans-serif; }
.ital { font: italic 700 19px/21px "Liberation Mono", monospace; }
.abc { font-size: 8.5px; letter-spacing: -.3px; text-decoration: line-through; }
.tools .tiny { font: 700 6px "Open Sans", sans-serif; }
.canvas { height: 323px; background: #fff; }
.status { height: 23px; border-top: 1px solid #e5e5e5; background: #f7f7f7; padding-left: 10px; font-size: 12px; line-height: 22px; letter-spacing: -.1px; }

.box { background: #fff; border: 1px solid #e5e5e5; box-shadow: 0 1px 1px rgba(0,0,0,.04); }
.box h2 { display: flex; justify-content: space-between; align-items: center; margin: 0; height: 36px; padding: 0 14px 0 12px; border-bottom: 1px solid #eee; font-size: 14px; font-weight: 600; color: #23282d; letter-spacing: .05px; }
.box.loc h2, .box.tax h2 { letter-spacing: .2px; }
.loc { margin-top: 20px; height: 400px; }
.loc p { margin: 12px 12px 0; height: 33px; line-height: 20px; letter-spacing: -.138px; }
.map { position: relative; width: 1377px; height: 290px; margin-left: 12px; overflow: hidden; }
.map-art { display: block; }
.search { position: absolute; right: 16px; top: 16px; width: 344px; height: 32px; padding: 0 6px; background: #fff; box-shadow: 0 2px 6px rgba(0,0,0,.3); font: 15px/32px Roboto, sans-serif; letter-spacing: -.3px; color: #aaa; }
.relief { mix-blend-mode: soft-light; opacity: .35; }
.relief.strong { opacity: .5; }
.relief.soft { mix-blend-mode: multiply; opacity: .1; }
.road, .road-edge { fill: none; stroke-linejoin: round; }
.road-edge { stroke: #e8b44a; stroke-width: 3.2px; }
.road { stroke: #fbcf58; stroke-width: 2px; }
.lbl text { font: 11px Roboto, sans-serif; fill: #3f3f3c; stroke: #fff; stroke-opacity: .8; stroke-width: 2.5px; paint-order: stroke; stroke-linejoin: round; }
.lbl.big text { font-size: 13px; }
.lbl.big .xl { font-size: 14px; }
.lbl .it, .lbl.park text { font-style: italic; }
.lbl.park text { fill: #34702e; stroke-opacity: .5; }
.num text { font: 10px Roboto, sans-serif; fill: #333; text-anchor: middle; }
.num .w { fill: #fff; font-weight: 700; }
.num .g { fill: #0f8f5f; font-weight: 700; }

.side { width: 280px; display: flex; flex-direction: column; gap: 20px; }
.pub { height: 147px; padding: 10px 10px 0; border-bottom: 1px solid #ddd; }
.row { display: flex; align-items: center; height: 34px; letter-spacing: -.05px; }
.row:nth-child(2) { margin-top: 4px; }
.row .ic { margin: 1px 6px 0 -1px; fill: #82878c; }
.row a, .addcat, .setimg { color: #0073aa; text-decoration: underline; }
b { font-weight: 600; }
.actions { display: flex; justify-content: space-between; align-items: center; height: 50px; padding: 0 10px 0 12px; background: #f5f5f5; }
.trash { color: #a00; padding-bottom: 1px; }
.primary-btn { width: 70px; height: 30px; background: #00a0d2; border: 1px solid #0073aa; border-radius: 3px; color: #fff; padding: 0; box-shadow: inset 0 1px 0 rgba(120,200,230,.5), 0 1px 0 rgba(0,0,0,.15); }
.tax { height: 214px; }
.tax-tabs { display: flex; margin: 8px 12px 0; height: 27px; }
.tt { padding: 4px 9px; color: #0073aa; }
.tt.on { position: relative; height: 28px; width: 131px; padding: 3px 0 0 5px; border: 1px solid #ddd; border-bottom: 0; background: #fdfdfd; color: #32373c; white-space: nowrap; }
.tax-panel { margin: 0 12px; height: 76px; border: 1px solid #ddd; background: #fdfdfd; padding: 14px 12px; }
.tax-panel label { display: flex; align-items: center; height: 24px; letter-spacing: -.1px; }
.tax-panel .child { margin-left: 18px; }
.cb { width: 16px; height: 16px; margin-right: 7px; border: 1px solid #b4b9be; background: #fff; box-shadow: inset 0 1px 2px rgba(0,0,0,.1); }
.addcat { display: block; width: max-content; margin: 17px 12px 0; font-weight: 600; letter-spacing: -.1px; }
.feat { height: 83px; }
.setimg { display: block; width: max-content; margin: 13px 12px 0; letter-spacing: -.14px; }
```
